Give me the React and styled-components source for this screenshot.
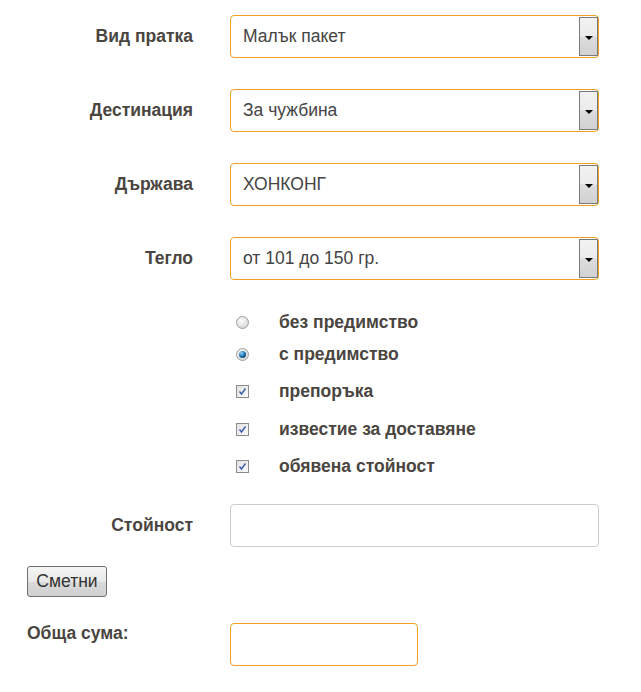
import React from 'react';
import styled, { createGlobalStyle } from 'styled-components';

const GlobalStyle = createGlobalStyle`
  html, body {
    margin: 0;
    padding: 0;
    background: #fff;
  }
  body {
    font-family: "Liberation Sans", Arial, sans-serif;
    color: #4a4540;
  }
`;

const Form = styled.div`
  width: 641px;
  padding: 15px 0 0 0;
  box-sizing: border-box;
`;

const Row = styled.div`
  display: grid;
  grid-template-columns: 193px 369px;
  column-gap: 37px;
  align-items: center;
  margin-bottom: ${(p) => p.$mb || 0}px;
`;

const Label = styled.div`
  text-align: right;
  font-weight: bold;
  font-size: 17.5px;
  color: #4a4540;
`;

const SelectBox = styled.div`
  display: flex;
  align-items: stretch;
  height: 43px;
  box-sizing: border-box;
  border: 1px solid #f0a020;
  border-radius: 4px;
  background: #fff;
`;

const SelectValue = styled.div`
  flex: 1;
  display: flex;
  align-items: center;
  padding-left: 12px;
  font-size: 17.5px;
  color: #444;
`;

const ArrowButton = styled.div`
  width: 19px;
  margin: 1px 0 1px 0;
  box-sizing: border-box;
  border: 1px solid #7a7a7a;
  background: linear-gradient(#f2f2f2 0%, #ececec 48%, #dcdcdc 52%, #d2d2d2 100%);
  display: flex;
  align-items: center;
  justify-content: center;
  padding-top: 2px;
`;

const Triangle = styled.div`
  width: 0;
  height: 0;
  border-left: 4px solid transparent;
  border-right: 4px solid transparent;
  border-top: 4px solid #000;
`;

const Options = styled.div`
  display: flex;
  flex-direction: column;
  padding-left: 236px;
  margin-top: 32px;
`;

const Option = styled.label`
  display: flex;
  align-items: center;
  height: 20px;
  margin-bottom: ${(p) => p.$mb}px;
  font-weight: bold;
  font-size: 17.5px;
  color: #4a4540;
`;

const Radio = styled.span`
  width: 13px;
  height: 13px;
  border-radius: 50%;
  box-sizing: border-box;
  border: 1px solid #a0a0a0;
  background: radial-gradient(circle at 40% 35%, #fdfdfd 0%, #e0e0e0 60%, #c8c8c8 100%);
  display: flex;
  align-items: center;
  justify-content: center;
  margin-right: 30px;
`;

const RadioDot = styled.span`
  width: 7px;
  height: 7px;
  border-radius: 50%;
  background: radial-gradient(circle at 35% 30%, #9ad8fa 0%, #1a6fb0 50%, #0a2440 100%);
`;

const Check = styled.span`
  width: 13px;
  height: 13px;
  box-sizing: border-box;
  border: 1px solid #8c8c8c;
  background: linear-gradient(135deg, #e2e2e2, #fafafa);
  display: flex;
  align-items: center;
  justify-content: center;
  margin-right: 30px;
`;

const TextInput = styled.div`
  height: 43px;
  box-sizing: border-box;
  border: 1px solid ${(p) => (p.$accent ? '#f0a020' : '#cccccc')};
  border-radius: 4px;
  background: #fff;
  width: ${(p) => p.$w || 369}px;
`;

const Button = styled.button`
  margin: 19px 0 0 27px;
  height: 31px;
  width: 80px;
  box-sizing: border-box;
  border: 1px solid #707070;
  border-radius: 3px;
  background: linear-gradient(#f6f6f6 0%, #e8e8e8 50%, #dadada 51%, #d0d0d0 100%);
  font-family: "Liberation Sans", Arial, sans-serif;
  font-size: 17.5px;
  color: #333;
  padding: 0;
  display: block;
`;

const TotalRow = styled.div`
  display: grid;
  grid-template-columns: 203px 188px;
  column-gap: 0;
  padding-left: 27px;
  margin-top: 26px;
`;

const TotalLabel = styled.div`
  font-weight: bold;
  font-size: 17.5px;
  color: #4a4540;
  padding-top: 0;
`;

const CheckMark = () => (
  <svg width="9" height="9" viewBox="0 0 9 9">
    <path d="M1.5 4.5 L3.5 7 L7.5 1.5" fill="none" stroke="#3a5ea8" strokeWidth="1.4" />
  </svg>
);

const Select = ({ value }) => (
  <SelectBox>
    <SelectValue>{value}</SelectValue>
    <ArrowButton>
      <Triangle />
    </ArrowButton>
  </SelectBox>
);

const fields = [
  { label: 'Вид пратка', value: 'Малък пакет' },
  { label: 'Дестинация', value: 'За чужбина' },
  { label: 'Държава', value: 'ХОНКОНГ' },
  { label: 'Тегло', value: 'от 101 до 150 гр.' },
];

export default function App() {
  return (
    <>
      <GlobalStyle />
      <Form>
        {fields.map((f, i) => (
          <Row key={f.label} $mb={i < fields.length - 1 ? 31 : 0}>
            <Label>{f.label}</Label>
            <Select value={f.value} />
          </Row>
        ))}

        <Options>
          <Option $mb={12}>
            <Radio />
            без предимство
          </Option>
          <Option $mb={17}>
            <Radio>
              <RadioDot />
            </Radio>
            с предимство
          </Option>
          <Option $mb={18}>
            <Check>
              <CheckMark />
            </Check>
            препоръка
          </Option>
          <Option $mb={17}>
            <Check>
              <CheckMark />
            </Check>
            известие за доставяне
          </Option>
          <Option $mb={0}>
            <Check>
              <CheckMark />
            </Check>
            обявена стойност
          </Option>
        </Options>

        <Row style={{ marginTop: 28 }}>
          <Label>Стойност</Label>
          <TextInput />
        </Row>

        <Button>Сметни</Button>

        <TotalRow>
          <TotalLabel>Обща сума:</TotalLabel>
          <TextInput $accent $w={188} />
        </TotalRow>
      </Form>
    </>
  );
}
